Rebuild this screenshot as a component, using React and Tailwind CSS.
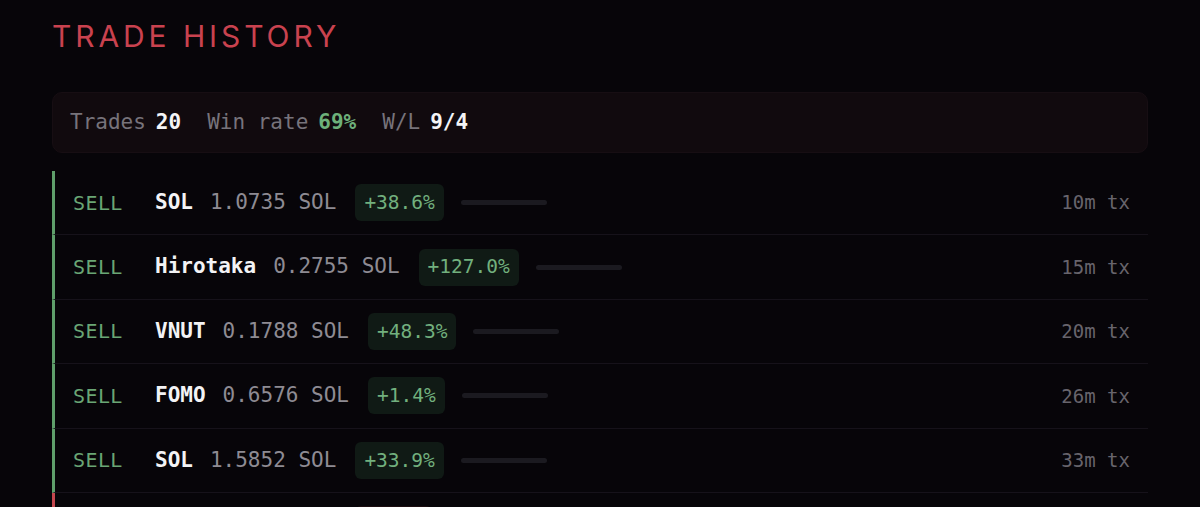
import React from "react";

const trades = [
  { side: "SELL", token: "SOL", amount: "1.0735 SOL", pnl: "+38.6%", ago: "10m" },
  { side: "SELL", token: "Hirotaka", amount: "0.2755 SOL", pnl: "+127.0%", ago: "15m" },
  { side: "SELL", token: "VNUT", amount: "0.1788 SOL", pnl: "+48.3%", ago: "20m" },
  { side: "SELL", token: "FOMO", amount: "0.6576 SOL", pnl: "+1.4%", ago: "26m" },
  { side: "SELL", token: "SOL", amount: "1.5852 SOL", pnl: "+33.9%", ago: "33m" },
  { side: "BUY", token: "SOL", amount: "0.5000 SOL", pnl: "-4.2%", ago: "40m", loss: true },
];

const mono = { fontFamily: '"DejaVu Sans Mono", "Liberation Mono", monospace' };

const TradeRow = ({ trade }) => (
  <div
    className={`flex items-center h-[64.4px] shrink-0 border-l-[3px] ${
      trade.loss ? "border-l-[#c4474e]" : "border-l-[#5f9f6b]"
    } border-b border-b-[#16121a] pl-[18px] pr-[18px]`}
  >
    <span
      className={`w-[82px] shrink-0 text-[20px] tracking-[0.02em] ${trade.loss ? "text-[#c4474e]" : "text-[#6aa675]"}`}
    >
      {trade.side}
    </span>
    <span className="text-[21px] font-bold text-[#f3f3f5]">{trade.token}</span>
    <span className="ml-[17px] text-[21px] text-[#8e8b93]">{trade.amount}</span>
    <span
      className={`ml-[19px] h-[37px] px-[9px] flex items-center rounded-[6px] text-[19.5px] ${
        trade.loss ? "bg-[#1c0d10] text-[#c4474e]" : "bg-[#101a15] text-[#72b07e]"
      }`}
    >
      {trade.pnl}
    </span>
    <span className="ml-[17px] w-[86px] h-[5px] rounded-full bg-[#1b1a20]" />
    <span className="ml-auto text-[19px] text-[#67646c]">
      {trade.ago} tx
    </span>
  </div>
);

const Stat = ({ label, value, valueClass }) => (
  <span className="flex items-baseline">
    <span className="text-[#77737b]">{label}</span>
    <span className={`ml-[10px] font-bold ${valueClass}`}>{value}</span>
  </span>
);

export default function App() {
  return (
    <div className="w-[1200px] h-[507px] overflow-hidden bg-[#070509] px-[52px] pt-[18px]">
      <h1
        className="text-[30px] leading-[36px] tracking-[0.13em] text-[#c9424f]"
        style={{ fontFamily: 'Inter, "Noto Sans", sans-serif' }}
      >
        TRADE HISTORY
      </h1>

      <div
        className="mt-[38px] h-[61px] flex items-center gap-[26px] px-[17px] rounded-[10px] bg-[#110a0e] border border-[#170e13] text-[21px]"
        style={mono}
      >
        <Stat label="Trades" value="20" valueClass="text-[#f4f4f6]" />
        <Stat label="Win rate" value="69%" valueClass="text-[#6db07a]" />
        <Stat label="W/L" value="9/4" valueClass="text-[#f4f4f6]" />
      </div>

      <div className="mt-[18px] flex flex-col" style={mono}>
        {trades.map((t, i) => (
          <TradeRow key={i} trade={t} />
        ))}
      </div>
    </div>
  );
}
